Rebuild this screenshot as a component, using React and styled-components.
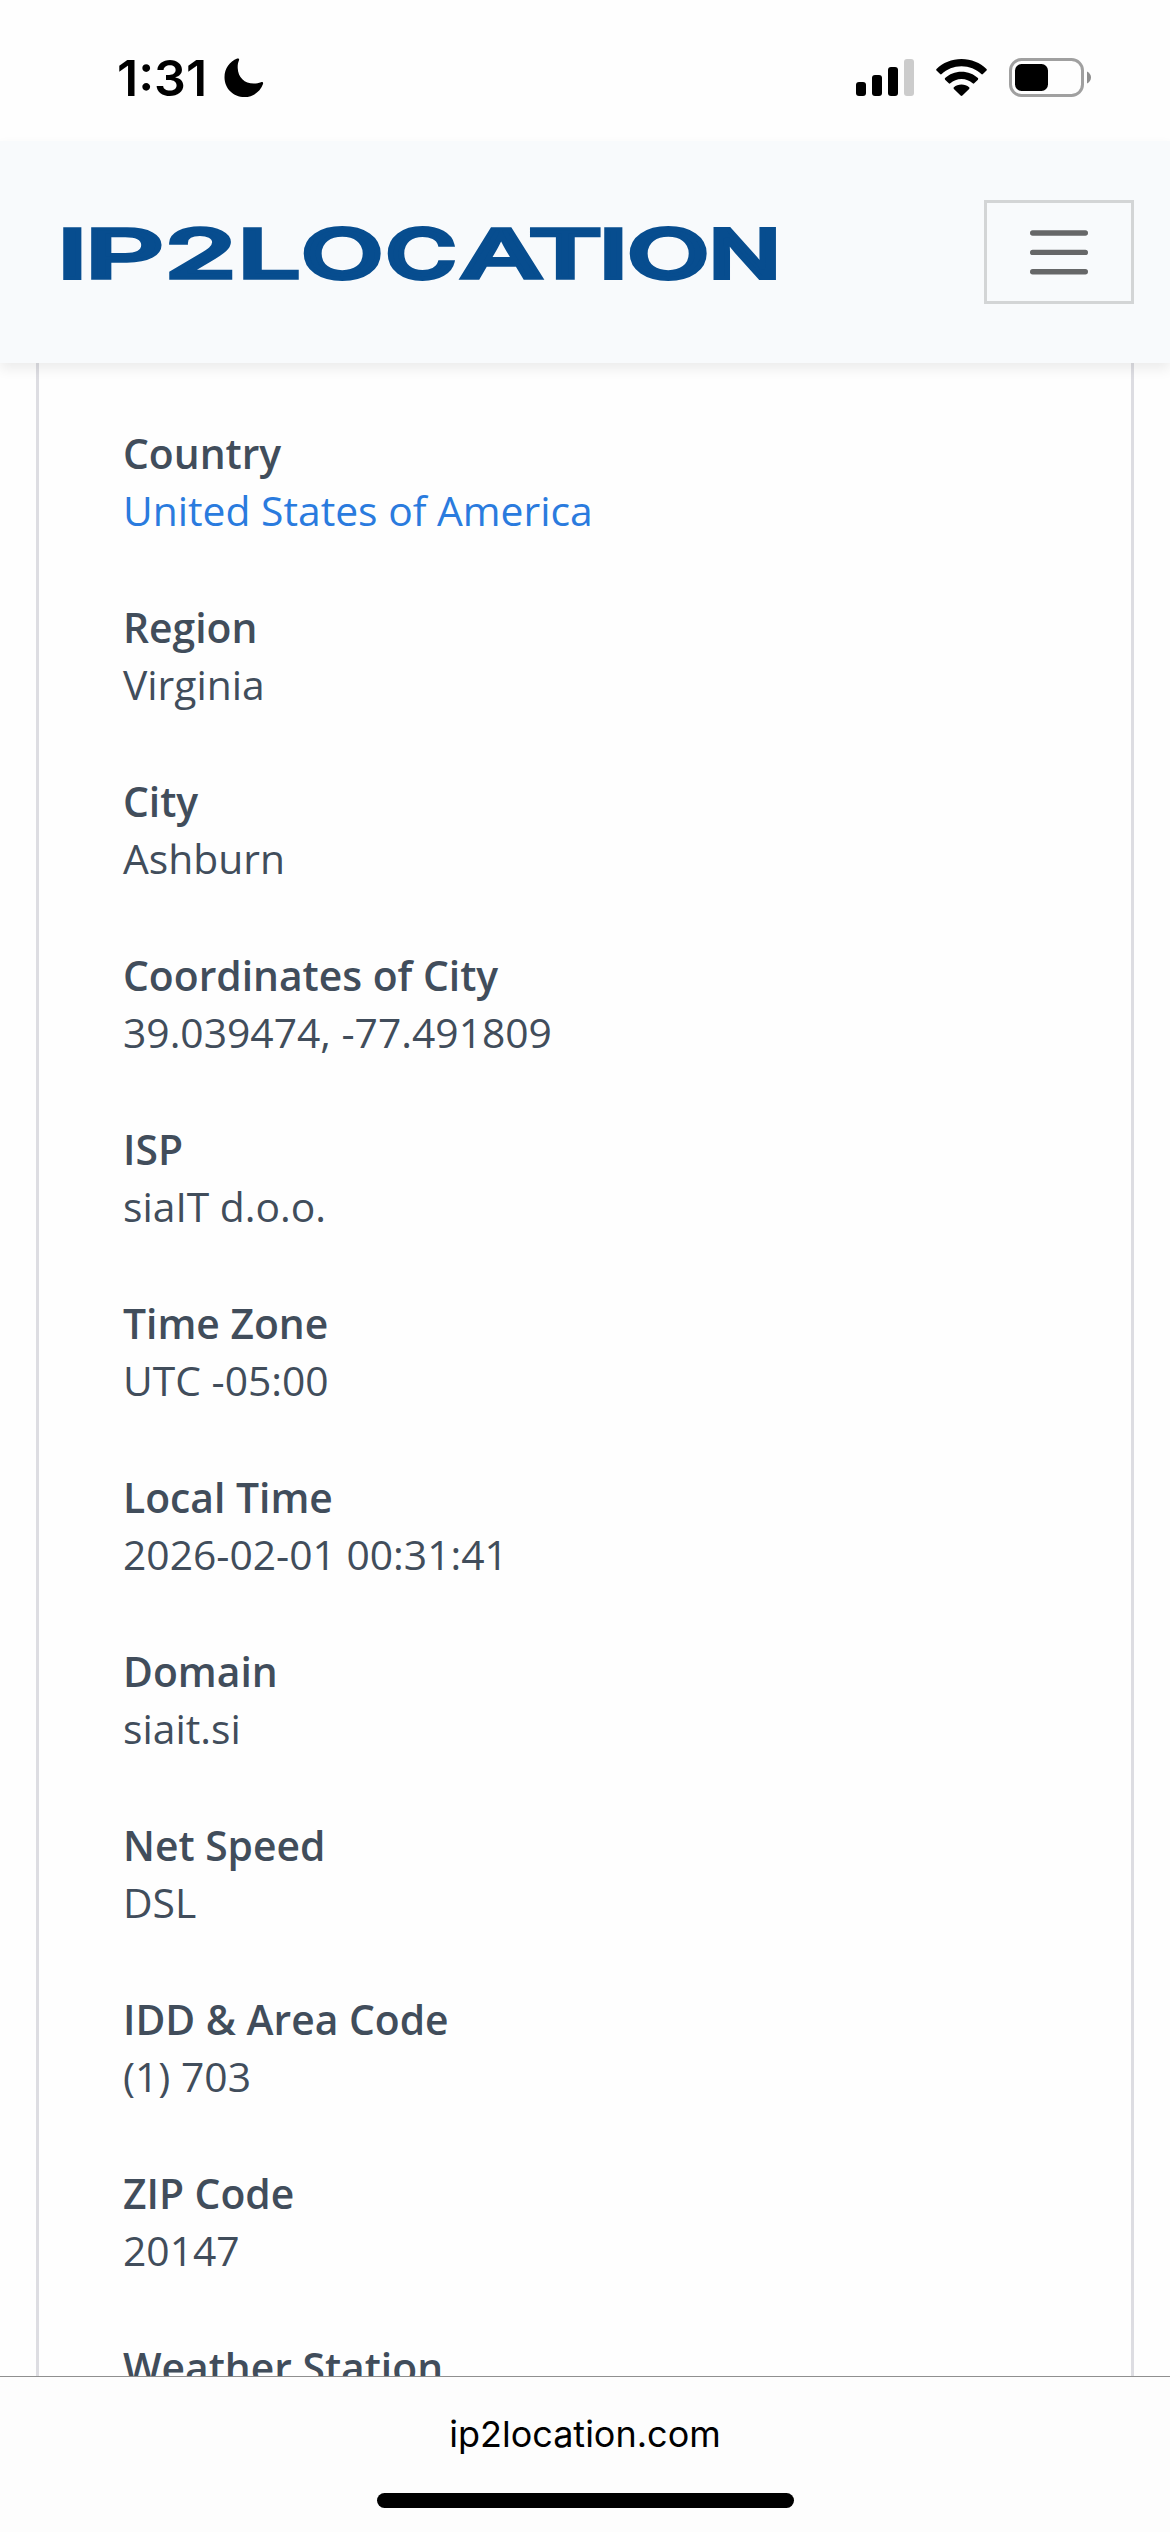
import React from 'react';
import styled, { createGlobalStyle } from 'styled-components';

const details = [
  { label: 'Country', value: 'United States of America', link: true },
  { label: 'Region', value: 'Virginia' },
  { label: 'City', value: 'Ashburn' },
  { label: 'Coordinates of City', value: '39.039474, -77.491809' },
  { label: 'ISP', value: 'siaIT d.o.o.' },
  { label: 'Time Zone', value: 'UTC -05:00' },
  { label: 'Local Time', value: '2026-02-01 00:31:41' },
  { label: 'Domain', value: 'siait.si' },
  { label: 'Net Speed', value: 'DSL' },
  { label: 'IDD & Area Code', value: '(1) 703' },
  { label: 'ZIP Code', value: '20147' },
  { label: 'Weather Station' }
];

// character, x, horizontal stretch
const wordmark = [
  ['I', 57.5, 1.6],
  ['P', 84.2, 1.84],
  ['2', 164, 1.74],
  ['L', 237.3, 1.65],
  ['O', 300.7, 1.59],
  ['C', 385.3, 1.43],
  ['A', 460, 1.72],
  ['T', 528, 1.68],
  ['I', 598.5, 1.6],
  ['O', 626.7, 1.59],
  ['N', 708.7, 1.4]
];

const Logo = () => (
  <LogoSvg viewBox="60 220 722 66" role="img" aria-label="IP2Location">
    {wordmark.map(([char, x, stretch], idx) => (
      <LogoLetter
        key={idx}
        transform={`translate(${x} 277.5) scale(${stretch} 1)`}
      >
        {char}
      </LogoLetter>
    ))}
  </LogoSvg>
);

const MoonIcon = () => (
  <svg width="40" height="40" viewBox="0 0 40 40">
    <path
      d="M13.2 0.6C14.6 0.1 15.6 1 15 2.3C13.9 4.8 13.6 7.2 13.7 10C14 19.4 20.5 25.6 29.8 25.6C32.4 25.6 34.6 25.2 37 24.3C38.5 23.7 39.5 24.7 39 26.1C36.3 33.8 29 39 20.5 39C9.2 39 0.5 30.4 0.5 19.2C0.5 10.8 5.6 3.4 13.2 0.6Z"
      fill="#000"
    />
  </svg>
);

const SignalIcon = () => (
  <svg width="58" height="38" viewBox="0 0 58 38">
    <rect x="0" y="23" width="10" height="14" rx="3" />
    <rect x="16" y="16" width="10" height="21" rx="3" />
    <rect x="32" y="8" width="10" height="29" rx="3" />
    <rect x="48" y="0" width="10" height="37" rx="3" fill="#cccccc" />
  </svg>
);

const WifiIcon = () => (
  <svg width="51" height="38" viewBox="0 0 51 38">
    <path d="M25.5 0C35.3 0 44.2 3.8 50.5 9.9Q51.2 10.7 50.5 11.5L46.9 15.1Q46.1 15.8 45.3 15.1C40.1 10.1 33.2 7.2 25.5 7.2C17.8 7.2 10.9 10.1 5.7 15.1Q4.9 15.8 4.1 15.1L0.5 11.5Q-0.2 10.7 0.5 9.9C6.8 3.8 15.7 0 25.5 0Z" />
    <path d="M25.5 12.7C31.9 12.7 37.7 15.1 41.9 19.1Q42.6 19.9 41.9 20.7L38.2 24.3Q37.5 25 36.7 24.3C33.7 21.5 29.8 19.9 25.5 19.9C21.2 19.9 17.3 21.5 14.3 24.3Q13.5 25 12.8 24.3L9.1 20.7Q8.4 19.9 9.1 19.1C13.3 15.1 19.1 12.7 25.5 12.7Z" />
    <path d="M25.5 25.4C28.4 25.4 31.1 26.4 33.1 28.2Q34 29 33.1 29.9L26.4 36.6Q25.5 37.4 24.6 36.6L17.9 29.9Q17 29 17.9 28.2C19.9 26.4 22.6 25.4 25.5 25.4Z" />
  </svg>
);

const BatteryIcon = () => (
  <svg width="83" height="39" viewBox="0 0 83 39">
    <rect
      x="1.5"
      y="1.5"
      width="72"
      height="36"
      rx="11"
      fill="none"
      stroke="#a0a0a0"
      strokeWidth="3"
    />
    <rect x="6" y="6" width="33" height="27" rx="6.5" />
    <path d="M78 13.5C80.4 14.6 82 16.9 82 19.5S80.4 24.4 78 25.5Z" fill="#8e8e8e" />
  </svg>
);

const MenuIcon = () => (
  <svg width="58" height="46" viewBox="0 0 58 46">
    <g stroke="#666768" strokeWidth="5.4" strokeLinecap="round">
      <line x1="2.7" y1="4" x2="55.3" y2="4" />
      <line x1="2.7" y1="23.4" x2="55.3" y2="23.4" />
      <line x1="2.7" y1="42.8" x2="55.3" y2="42.8" />
    </g>
  </svg>
);

export default function App() {
  return (
    <Screen>
      <GlobalStyle />
      <StatusBar>
        <Clock>
          1:31
          <MoonIcon />
        </Clock>
        <StatusIcons>
          <SignalIcon />
          <WifiIcon />
          <BatteryIcon />
        </StatusIcons>
      </StatusBar>
      <Navbar>
        <Logo />
        <MenuButton aria-label="Toggle navigation">
          <MenuIcon />
        </MenuButton>
      </Navbar>
      <Content>
        <Card>
          {details.map(({ label, value, link }) => (
            <Item key={label}>
              <Label>{label}</Label>
              {value && <Value $link={link}>{value}</Value>}
            </Item>
          ))}
        </Card>
      </Content>
      <AddressBar>
        <Address>ip2location.com</Address>
        <HomeIndicator />
      </AddressBar>
    </Screen>
  );
}

const GlobalStyle = createGlobalStyle`
  * { box-sizing: border-box; }
  body { margin: 0; background: #fff; }
  svg { display: block; flex-shrink: 0; }
`;

const Screen = styled.div`
  display: flex;
  flex-direction: column;
  width: 1170px;
  height: 2532px;
  overflow: hidden;
  background: #fefefe;
  font-family: 'Open Sans', sans-serif;
`;

const StatusBar = styled.div`
  display: flex;
  justify-content: space-between;
  flex-shrink: 0;
  height: 141px;
  padding: 58px 78px 0 117px;
`;

const Clock = styled.div`
  display: flex;
  gap: 17px;
  height: 40px;
  font: 600 50px/40px Inter, sans-serif;
  color: #000;
`;

const StatusIcons = styled.div`
  display: flex;
  align-items: center;
  gap: 22px;
  height: 39px;
`;

const Navbar = styled.header`
  display: flex;
  align-items: flex-start;
  justify-content: space-between;
  flex-shrink: 0;
  height: 222px;
  padding: 59px 36px 0 60px;
  background: #f8fafc;
  box-shadow: 0 6px 12px rgba(0, 0, 0, 0.075);
  z-index: 1;
`;

const LogoSvg = styled.svg`
  width: 722px;
  height: 66px;
  margin-top: 20px;
  overflow: visible;
`;

const LogoLetter = styled.text`
  font: 500 68px Inter, sans-serif;
  fill: #074d8f;
  stroke: #074d8f;
  stroke-width: 5px;
  vector-effect: non-scaling-stroke;
`;

const MenuButton = styled.button`
  display: flex;
  align-items: center;
  justify-content: center;
  width: 150px;
  height: 104px;
  padding: 0;
  border: 3px solid #d3d5d6;
  background: transparent;
`;

const Content = styled.main`
  display: flex;
  flex: 1;
  min-height: 0;
  padding: 0 36px;
  overflow: hidden;
`;

const Card = styled.dl`
  display: flex;
  flex: 1;
  flex-direction: column;
  gap: 59.6px;
  margin: 0;
  padding: 61.6px 84px 0;
  border: solid #dddde2;
  border-width: 0 3px;
`;

const Item = styled.div`
  flex-shrink: 0;
  font-size: 40.8px;
  line-height: 57.2px;
  color: #414d5b;
`;

const Label = styled.dt`font-weight: 600;`;

const Value = styled.dd`
  margin: 0;
  color: ${props => (props.$link ? '#2a7bde' : 'inherit')};
`;

const AddressBar = styled.footer`
  display: flex;
  flex-direction: column;
  align-items: center;
  flex-shrink: 0;
  height: 156px;
  border-top: 1px solid #8f8f8f;
  background: #fdfdfd;
`;

const Address = styled.div`
  margin-top: 35px;
  font: 400 36px/44px Inter, sans-serif;
  color: #000;
`;

const HomeIndicator = styled.div`
  width: 417px;
  height: 15px;
  margin-top: 37px;
  border-radius: 8px;
  background: #000;
`;
